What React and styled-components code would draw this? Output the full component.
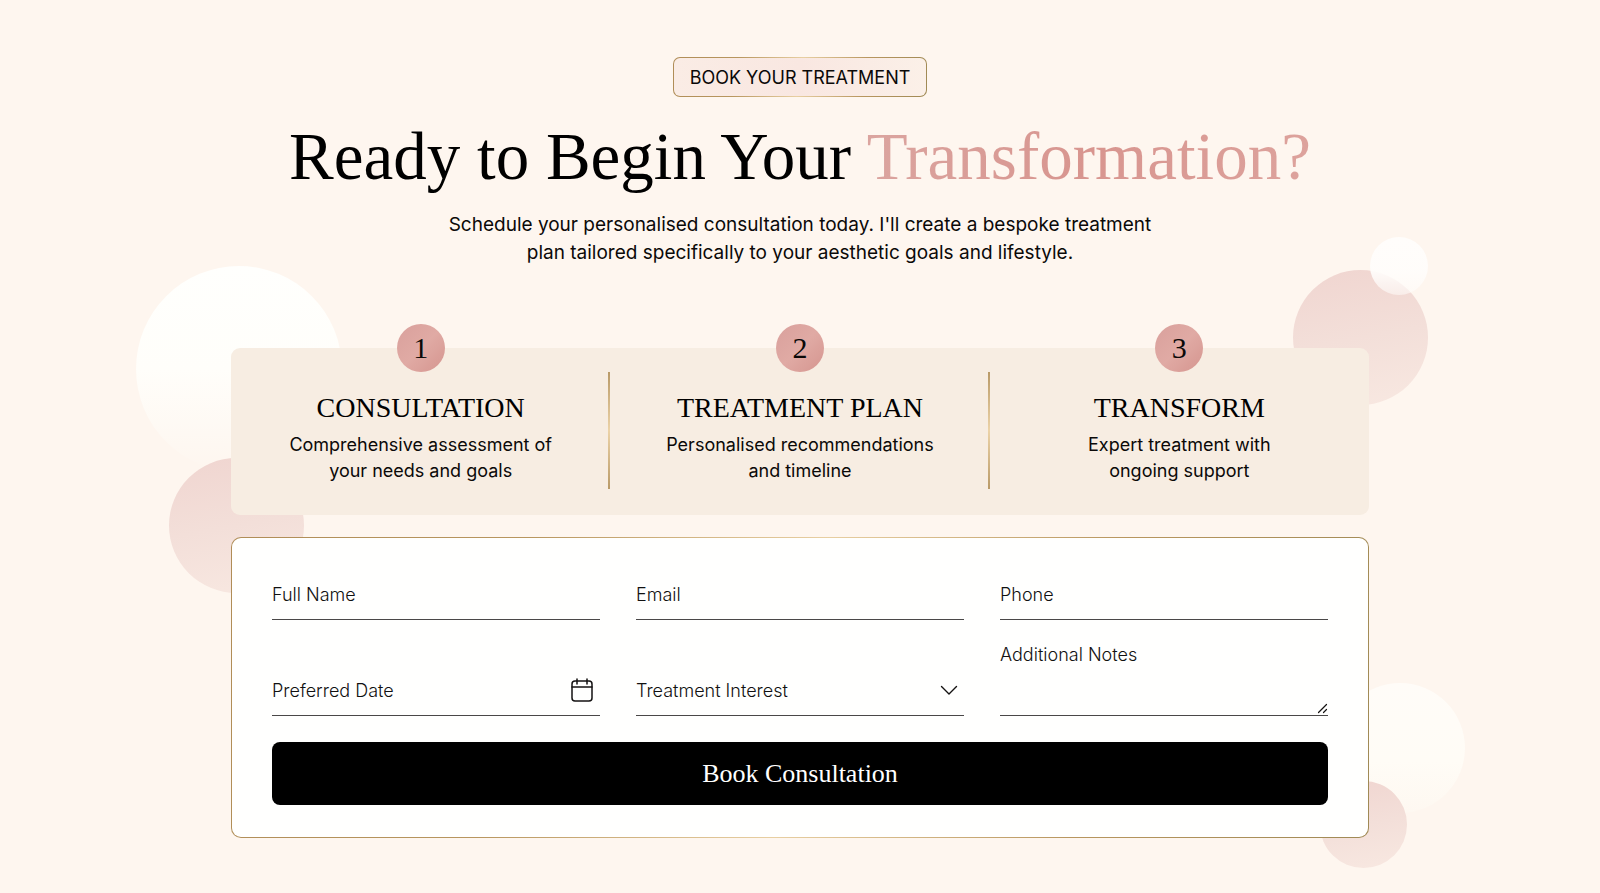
import React, { useState } from "react";
import styled, { createGlobalStyle } from "styled-components";

const serif = '"Liberation Serif", "Times New Roman", serif';
const sans = 'Inter, "Liberation Sans", sans-serif';
const rose = "linear-gradient(135deg, #d9a09c, #e0aaa4 50%, #d5958f)";
const gold = "linear-gradient(100deg, #b08d57, #b8965f 25%, #e8cfa2 50%, #b8965f 75%, #a08a55)";

const GlobalStyle = createGlobalStyle`
  *, *::before, *::after { box-sizing: border-box; }
  body {
    margin: 0;
    background: #fef6ef;
    color: #0b0908;
    font-family: ${sans};
    overflow-x: hidden;
  }
`;

const Page = styled.main`
  min-height: 100vh;
  padding: 57px 24px 55px;
  display: flex;
  flex-direction: column;
  align-items: center;
  overflow: hidden;
`;

const Header = styled.header`
  display: flex;
  flex-direction: column;
  align-items: center;
  text-align: center;
`;

const Badge = styled.p`
  margin: 0;
  height: 40px;
  padding: 0 16px;
  display: flex;
  align-items: center;
  border: 1px solid transparent;
  border-radius: 7px;
  background: linear-gradient(90deg, #faece5, #f9e7e1 50%, #fbf0e8) padding-box, ${gold} border-box;
  font-size: 18px;
`;

const Heading = styled.h1`
  margin: 19px 0 15px;
  font-family: ${serif};
  font-size: 67px;
  line-height: 80px;
  font-weight: 400;
  color: #000;
`;

const Accent = styled.span`
  background: linear-gradient(100deg, #dba5a0, #d8958f 50%, #dda39d);
  background-clip: text;
  color: transparent;
`;

const Lead = styled.p`
  margin: 0;
  font-size: 19px;
  line-height: 28px;
`;

const Content = styled.div`
  position: relative;
  isolation: isolate;
  width: 100%;
  max-width: 1138px;
  margin-top: 81px;
  display: flex;
  flex-direction: column;
  gap: 22px;
`;

const Bubble = styled.span`
  position: absolute;
  z-index: -1;
  top: ${(p) => p.$top}px;
  ${(p) => p.$side}: -${(p) => p.$out}px;
  width: ${(p) => p.$size}px;
  height: ${(p) => p.$size}px;
  border-radius: 50%;
  background: ${(p) => tones[p.$tone]};
`;

const tones = {
  white: "linear-gradient(180deg, #fffffd, #fffefa 50%, #fef6ef00)",
  cream: "linear-gradient(180deg, #fffcf8, #fffcf6 60%, #fef8f1)",
  veil: "linear-gradient(180deg, #fffdfb, #fffdfbee 60%, #fffdfb88)",
  blush: "linear-gradient(170deg, #f0d5d0, #f3dfd9 50%, #f8e8e1)",
};

const bubbles = [
  { tone: "white", side: "left", out: 95, top: -82, size: 206 },
  { tone: "blush", side: "left", out: 62, top: 110, size: 135 },
  { tone: "blush", side: "right", out: 59, top: -78, size: 135 },
  { tone: "veil", side: "right", out: 59, top: -111, size: 58 },
  { tone: "cream", side: "right", out: 96, top: 335, size: 130 },
  { tone: "blush", side: "right", out: 38, top: 433, size: 87 },
];

const Steps = styled.ol`
  margin: 0;
  padding: 0;
  list-style: none;
  display: grid;
  grid-template-columns: repeat(3, 1fr);
  border-radius: 9px;
  background: #f7ede2;
`;

const Step = styled.li`
  display: flex;
  flex-direction: column;
  align-items: center;
  padding-bottom: 31px;
  text-align: center;
  background: ${(p) =>
    p.$divided
      ? "linear-gradient(180deg, #b99a68, #ecd3a8 50%, #b99a68) right 24px / 2px 117px no-repeat"
      : "none"};
`;

const StepNumber = styled.span`
  width: 48px;
  height: 48px;
  margin-top: -24px;
  display: grid;
  place-items: center;
  border-radius: 50%;
  background: ${rose};
  font-family: ${serif};
  font-size: 30px;
  line-height: 48px;
`;

const StepTitle = styled.h2`
  margin: 18px 0 6px;
  font-family: ${serif};
  font-size: 28px;
  line-height: 36px;
  font-weight: 400;
  color: #000;
`;

const StepText = styled.p`
  margin: 0;
  font-size: 18px;
  line-height: 26px;
`;

const Form = styled.form`
  padding: 32px 40px;
  display: grid;
  grid-template-columns: repeat(3, 1fr);
  column-gap: 36px;
  border: 1px solid transparent;
  border-radius: 10px;
  background: linear-gradient(#fffffe, #fffffe) padding-box, ${gold} border-box;
`;

const Field = styled.label`
  height: ${(p) => (p.$tall ? 96 : 50)}px;
  display: grid;
  align-items: end;
  border-bottom: 1px solid #4a4848;
  font-size: 18px;
  line-height: 24px;
  color: #111;
  font-weight: 300;

  > * { grid-area: 1 / 1; }
`;

const Caption = styled.span`
  align-self: ${(p) => (p.$top ? "start" : "end")};
  padding: ${(p) => (p.$top ? "23px 0 0" : "0 0 12px")};
  pointer-events: none;
  visibility: ${(p) => (p.$hidden ? "hidden" : "visible")};
`;

const controlStyle = `
  width: 100%;
  margin: 0;
  border: 0;
  outline: 0;
  border-radius: 0;
  background: transparent;
  font: inherit;
  color: inherit;
  appearance: none;
`;

const Input = styled.input`
  ${controlStyle}
  height: 49px;
  padding: 13px 0 0;

  &::-webkit-datetime-edit { opacity: ${(p) => (p.$empty ? 0 : 1)}; }
  &::-webkit-calendar-picker-indicator { width: 24px; height: 24px; opacity: 0; }
`;

const Select = styled.select`
  ${controlStyle}
  height: 49px;
  padding: 13px 40px 0 0;
`;

const TextArea = styled.textarea`
  ${controlStyle}
  height: 72px;
  padding: 0 16px 0 0;
  resize: none;
`;

const Icon = styled.svg`
  justify-self: end;
  margin: 0 ${(p) => p.$right || 0}px ${(p) => p.$bottom}px 0;
  fill: none;
  stroke: #141212;
  stroke-linecap: round;
  stroke-linejoin: round;
  pointer-events: none;
`;

const Submit = styled.button`
  grid-column: 1 / -1;
  height: 63px;
  margin-top: 26px;
  border: 0;
  border-radius: 8px;
  background: #000;
  color: #fff;
  font-family: ${serif};
  font-size: 26px;
  cursor: pointer;
`;

const steps = [
  { title: "CONSULTATION", lines: ["Comprehensive assessment of", "your needs and goals"] },
  { title: "TREATMENT PLAN", lines: ["Personalised recommendations", "and timeline"] },
  { title: "TRANSFORM", lines: ["Expert treatment with", "ongoing support"] },
];

const treatments = steps.map((s) => s.title);

export default function App() {
  const [values, setValues] = useState({});
  const bind = (name) => ({
    name,
    value: values[name] || "",
    onChange: (e) => setValues({ ...values, [name]: e.target.value }),
  });

  return (
    <>
      <GlobalStyle />
      <Page>
        <Header>
          <Badge>BOOK YOUR TREATMENT</Badge>
          <Heading>
            Ready to Begin Your <Accent>Transformation?</Accent>
          </Heading>
          <Lead>
            Schedule your personalised consultation today. I'll create a bespoke treatment
            <br />
            plan tailored specifically to your aesthetic goals and lifestyle.
          </Lead>
        </Header>

        <Content>
          {bubbles.map((b, i) => (
            <Bubble key={i} aria-hidden="true" $tone={b.tone} $side={b.side} $out={b.out} $top={b.top} $size={b.size} />
          ))}

          <Steps>
            {steps.map((s, i) => (
              <Step key={s.title} $divided={i < steps.length - 1}>
                <StepNumber>{i + 1}</StepNumber>
                <StepTitle>{s.title}</StepTitle>
                <StepText>
                  {s.lines[0]}
                  <br />
                  {s.lines[1]}
                </StepText>
              </Step>
            ))}
          </Steps>

          <Form onSubmit={(e) => e.preventDefault()}>
            <Field>
              <Input type="text" {...bind("name")} />
              <Caption $hidden={!!values.name}>Full Name</Caption>
            </Field>
            <Field>
              <Input type="email" {...bind("email")} />
              <Caption $hidden={!!values.email}>Email</Caption>
            </Field>
            <Field>
              <Input type="tel" {...bind("phone")} />
              <Caption $hidden={!!values.phone}>Phone</Caption>
            </Field>
            <Field $tall>
              <Input type="date" $empty={!values.date} {...bind("date")} />
              <Caption $hidden={!!values.date}>Preferred Date</Caption>
              <Icon $right={7} $bottom={13} width="22" height="24" viewBox="0 0 22 24" strokeWidth="1.5" aria-hidden="true">
                <rect x="1" y="3" width="20" height="20" rx="3" />
                <path d="M1 9h20M6 1v5M16 1v5" />
              </Icon>
            </Field>
            <Field $tall>
              <Select {...bind("interest")}>
                <option value="" />
                {treatments.map((t) => (
                  <option key={t}>{t}</option>
                ))}
              </Select>
              <Caption $hidden={!!values.interest}>Treatment Interest</Caption>
              <Icon $right={6} $bottom={19} width="18" height="11" viewBox="0 0 18 11" strokeWidth="1.4" aria-hidden="true">
                <path d="M1.500 1.500l7.500 7.500 7.500-7.500" />
              </Icon>
            </Field>
            <Field $tall>
              <TextArea {...bind("notes")} />
              <Caption $top $hidden={!!values.notes}>Additional Notes</Caption>
              <Icon $bottom={1} width="11" height="11" viewBox="0 0 11 11" strokeWidth="1.2" aria-hidden="true">
                <path d="M1.500 9.500l8-8M6.500 9.500l3-3" />
              </Icon>
            </Field>
            <Submit type="submit">Book Consultation</Submit>
          </Form>
        </Content>
      </Page>
    </>
  );
}
